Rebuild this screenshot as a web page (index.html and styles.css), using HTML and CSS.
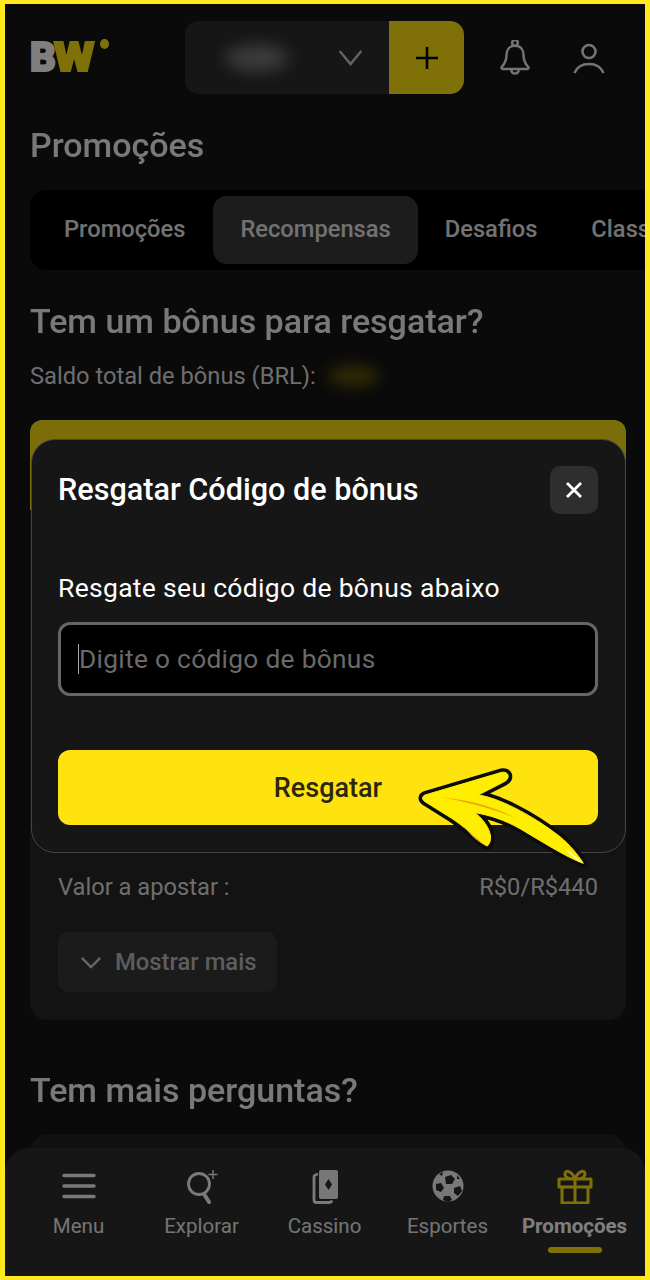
FILE: index.html
```html
<!DOCTYPE html>
<html lang="pt-BR">
<head>
<meta charset="utf-8">
<title>Promoções</title>
<link rel="stylesheet" href="styles.css">
</head>
<body>
<div class="frame">
  <main class="page">
    <header class="topbar">
      <div class="logo"><span class="logo-b">B</span><span class="logo-w">W</span><span class="logo-dot"></span></div>
      <div class="wallet">
        <div class="wallet-select">
          <span class="blur-balance"></span>
          <svg class="chevron" viewBox="0 0 26 18"><path d="M1.500 2 13 16 24.500 2"/></svg>
        </div>
        <div class="wallet-add"><svg viewBox="0 0 24 24"><path d="M12 1v22M1 12h22"/></svg></div>
      </div>
      <svg class="top-icon bell" viewBox="0 0 32 38"><path d="M16 6a3 3 0 1 1 .01 0M16 6c-6 0-9 4.500-9 10 0 6-2 9-5 12.500-.6.800-.2 2 1 2h26c1.200 0 1.600-1.200 1-2-3-3.500-5-6.500-5-12.500 0-5.500-3-10-9-10zM12 31c0 6 8 6 8 0"/></svg>
      <svg class="top-icon user" viewBox="0 0 32 32"><circle cx="16" cy="8.500" r="6.500"/><path d="M1.500 30C4 24 9.500 21 16 21s12 3 14.500 9"/></svg>
    </header>

    <h1 class="page-title">Promoções</h1>

    <nav class="tabs">
      <span class="tab">Promoções</span>
      <span class="tab active">Recompensas</span>
      <span class="tab">Desafios</span>
      <span class="tab">Classificação</span>
    </nav>

    <h2 class="section-title">Tem um bônus para resgatar?</h2>
    <p class="saldo">Saldo total de bônus (BRL):<span class="blur-bonus"></span></p>

    <section class="bonus-card">
      <div class="bonus-head"></div>
      <div class="bonus-body">
        <div class="bonus-row"><span>Valor a apostar :</span><span>R$0/R$440</span></div>
        <button class="more"><svg viewBox="0 0 24 14"><path d="M2 2l10 10L22 2"/></svg>Mostrar mais</button>
      </div>
    </section>

    <h2 class="section-title faq-title">Tem mais perguntas?</h2>
    <div class="faq-card"></div>
  </main>

  <nav class="bottom-nav">
    <div class="nav-item">
      <svg viewBox="0 0 36 36" class="nav-icon"><path class="line" d="M3 7.500h30M3 18h30M3 28.500h30"/></svg>
      <span>Menu</span>
    </div>
    <div class="nav-item">
      <svg viewBox="0 0 36 36" class="nav-icon"><circle class="thin" cx="15" cy="16" r="10.500"/><path class="thick" d="M20 26l5 8"/><path class="spark" d="M29 2v9M24.500 6.500h9"/></svg>
      <span>Explorar</span>
    </div>
    <div class="nav-item">
      <svg viewBox="0 0 36 36" class="nav-icon"><path class="thin" d="M11 6C8.500 6.500 7 7.500 7 9v23c0 1.500 1 2.500 2.500 2.500H22c1.500 0 2.500-.7 3-2"/><rect class="solid" x="12" y="2" width="19" height="29" rx="2"/><path class="cut" d="M21.500 11l3.500 5.500-3.500 5.500-3.500-5.500z"/></svg>
      <span>Cassino</span>
    </div>
    <div class="nav-item">
      <svg viewBox="0 0 36 36" class="nav-icon"><circle class="solid" cx="18" cy="18" r="15.500"/><path class="cut" d="M15 9l6-2 4 4-3 5-6 0zM6 16l5-1 3 5-3 4-5-2zM24 20l6-2 2 5-4 5-4-3zM14 28l6 0 2 4-4 2-5-2zM9 6l4-2-1 4zM27 7l3 4-3 0z"/></svg>
      <span>Esportes</span>
    </div>
    <div class="nav-item current">
      <svg viewBox="0 0 36 36" class="nav-icon"><path class="gift" d="M2 11h32v8H2zM5 19v16h26V19M18 11v24M18 11c-3-8-10-10-10-5 0 3 4 5 10 5zM18 11c3-8 10-10 10-5 0 3-4 5-10 5z"/></svg>
      <span>Promoções</span>
      <i class="nav-bar"></i>
    </div>
  </nav>

  <div class="scrim"></div>

  <section class="modal">
    <div class="modal-head">
      <h3 class="modal-title">Resgatar Código de bônus</h3>
      <button class="close"><svg viewBox="0 0 18 18"><path d="M2 2l14 14M16 2 2 16"/></svg></button>
    </div>
    <label class="field-label">Resgate seu código de bônus abaixo</label>
    <div class="input"><i class="caret"></i><span>Digite o código de bônus</span></div>
    <button class="submit">Resgatar</button>
  </section>

  <svg class="arrow" viewBox="0 0 750 510">
    <path class="arrow-halo" d="M622 372C575 315 520 270 452 232"/>
    <path class="arrow-outline" d="M135 165 365 97C385 93 392 112 375 124L295 165C350 172 450 220 540 290 570 315 595 345 610 370 570 356 510 320 420 266 370 238 330 226 285 218 325 250 345 295 322 318 300 310 275 275 215 235L135 185C125 178 125 170 135 165Z"/>
    <path class="arrow-fill" d="M135 165 365 97C385 93 392 112 375 124L295 165C350 172 450 220 540 290 570 315 595 345 610 370 570 356 510 320 420 266 370 238 330 226 285 218 325 250 345 295 322 318 300 310 275 275 215 235L135 185C125 178 125 170 135 165Z"/>
    <path class="arrow-shade" d="M250 258C275 280 298 308 322 318 300 312 275 290 250 258Z"/>
    <path class="arrow-streak" d="M180 172C260 178 340 200 412 236 340 207 260 185 180 172Z"/>
    <path class="arrow-light" d="M555 325C575 340 595 355 610 370 590 362 570 345 555 325Z"/>
  </svg>
</div>
</body>
</html>
```
FILE: styles.css
```css
* { box-sizing: border-box; }
html, body { margin: 0; padding: 0; }
body { width: 650px; height: 1280px; font-family: Roboto, "Liberation Sans", sans-serif; background: #000; }
h1, h2, h3, p { margin: 0; }
button { font-family: inherit; border: 0; padding: 0; }

.frame {
  position: relative;
  width: 650px;
  height: 1280px;
  overflow: hidden;
  border: solid #ffe81c;
  border-width: 4px 5px;
  background: #141414;
}
.page { display: flex; flex-direction: column; padding: 17px 19px 0 25px; }

.topbar { display: flex; align-items: center; height: 73px; }
.logo { position: relative; display: flex; width: 155px; height: 36px; align-items: center; font: 900 40px/36px Roboto, sans-serif; letter-spacing: -1.500px; -webkit-text-stroke: 2px currentColor; }
.logo-b { color: #fff; }
.logo-w { display: inline-block; color: #ffe30f; transform: scaleX(1.160); transform-origin: left center; }
.logo-dot { position: absolute; left: 70px; top: -1px; width: 9px; height: 10px; border-radius: 50%; background: #ffe30f; }
.wallet { display: flex; width: 279px; height: 73px; }
.wallet-select { display: flex; align-items: center; justify-content: space-between; width: 204px; padding: 0 26px 0 40px; background: #2c2c2c; border-radius: 14px 0 0 14px; }
.blur-balance { width: 64px; height: 26px; border-radius: 50%; background: #7a7a7a; filter: blur(8px); }
.chevron { width: 25px; height: 17px; fill: none; stroke: #fff; stroke-width: 2.500; opacity: .75; }
.wallet-add { display: flex; align-items: center; justify-content: center; width: 75px; background: #ffe30f; border-radius: 0 14px 14px 0; }
.wallet-add svg { width: 24px; height: 24px; fill: none; stroke: #000; stroke-width: 2.600; }
.top-icon { fill: none; stroke: #fff; stroke-width: 2.600; opacity: .9; }
.bell { width: 32px; height: 36px; margin-left: 35px; }
.user { width: 32px; height: 32px; margin-left: 42px; margin-top: 2px; }

.page-title { margin-top: 28px; font-size: 34px; line-height: 46px; font-weight: 500; color: #fff; opacity: .95; }

.tabs { display: flex; flex: none; align-items: center; height: 80px; margin: 22px -19px 0 0; padding: 0 6px; background: #000; border-radius: 16px 0 0 16px; overflow: hidden; white-space: nowrap; }
.tab { flex: none; padding: 0 27px; height: 68px; line-height: 67px; font-size: 23.700px; font-weight: 500; color: #e4e4e4; border-radius: 14px; }
.tab:first-child { padding: 0 28px; }
.tab.active { background: #393939; }

.section-title { font-size: 34px; line-height: 44px; font-weight: 500; color: #fff; opacity: .95; margin-top: 29px; }
.saldo { display: flex; align-items: center; margin-top: 18px; height: 30px; font-size: 23.700px; color: #ddd; }
.blur-bonus { width: 52px; height: 22px; margin-left: 12px; border-radius: 50%; background: #5c520a; filter: blur(7px); }

.bonus-card { display: flex; flex-direction: column; margin-top: 29px; height: 600px; background: #262626; border-radius: 12px 12px 18px 18px; overflow: hidden; }
.bonus-head { height: 90px; background: #f6dc12; flex: none; }
.bonus-body { display: flex; flex-direction: column; align-items: flex-start; padding: 361px 28px 0; }
.bonus-row { display: flex; justify-content: space-between; width: 100%; font-size: 23.700px; line-height: 32px; color: #dcdcdc; }
.more { display: flex; align-items: center; gap: 13px; width: 219px; height: 60px; margin-top: 29px; padding-left: 22px; border-radius: 10px; background: #363636; color: #bbb; font-size: 23.800px; font-weight: 500; }
.more svg { width: 22px; height: 13px; fill: none; stroke: #ccc; stroke-width: 2.600; }

.faq-title { margin-top: 48px; }
.faq-card { height: 120px; margin-top: 22px; background: #222; border-radius: 18px; }

.bottom-nav { position: absolute; left: 0; right: 0; bottom: 0; height: 128px; display: grid; grid-template-columns: 123px 123px 123px 123px 131px; padding: 20px 0 0 12px; background: #2c2c2c; border-radius: 24px 24px 0 0; }
.nav-item { position: relative; display: flex; flex-direction: column; align-items: center; color: #e8e8e8; font-size: 20.500px; white-space: nowrap; }
.nav-item span { margin-top: 9px; line-height: 26px; }
.nav-icon { width: 36px; height: 36px; fill: none; stroke: #f4f4f4; }
.nav-item.current { color: #fff; font-weight: 700; }
.nav-bar { position: absolute; top: 79px; width: 54px; height: 6px; border-radius: 3px; background: #ffe30f; }
.line { stroke-width: 3.400; stroke-linecap: round; }
.thin { stroke-width: 2.800; fill: none; }
.thick { stroke-width: 4; stroke-linecap: round; }
.spark { stroke-width: 1.400; }
.solid { fill: #f0f0f0; stroke: none; }
.cut { fill: #2c2c2c; stroke: none; }
.gift { stroke: #ffe30f; stroke-width: 3; stroke-linejoin: round; }

.scrim { position: absolute; inset: 0; background: rgba(0, 0, 0, .5); }

.modal { position: absolute; left: 26px; top: 435px; display: flex; flex-direction: column; width: 595px; height: 414px; padding: 26px 27px 0 26px; background: #161616; border: 1px solid #454545; border-radius: 24px; }
.modal-head { display: flex; justify-content: space-between; align-items: center; height: 48px; }
.modal-title { font-size: 30.600px; font-weight: 500; color: #fff; line-height: 46px; }
.close { display: flex; align-items: center; justify-content: center; width: 48px; height: 48px; background: #2e2e2e; border-radius: 10px; }
.close svg { width: 18px; height: 18px; fill: none; stroke: #fff; stroke-width: 2.800; }
.field-label { margin-top: 58px; height: 32px; line-height: 32px; font-size: 26.500px; color: #fff; letter-spacing: .3px; }
.input { display: flex; align-items: center; height: 74px; margin-top: 18px; padding-left: 17px; background: #000; border: 3px solid #666; border-radius: 12px; font-size: 26.300px; color: #6a6a6a; letter-spacing: .3px; }
.caret { width: 1px; height: 30px; background: #aaa; }
.submit { height: 75px; margin-top: 54px; background: #ffe30f; border-radius: 12px; font-size: 27px; font-weight: 500; color: #2b2610; }

.arrow { position: absolute; left: 375px; top: 736px; width: 250px; height: 170px; fill: none; }
.arrow-halo { stroke: #555; stroke-width: 1.500; }
.arrow-outline { fill: #0b0b0b; stroke: #0b0b0b; stroke-width: 24; stroke-linejoin: round; }
.arrow-fill { fill: #ffee00; stroke: #ffee00; stroke-width: 3; stroke-linejoin: round; }
.arrow-shade { fill: #f6b400; }
.arrow-streak { fill: #e8a800; }
.arrow-light { fill: #fffbd0; }
```
